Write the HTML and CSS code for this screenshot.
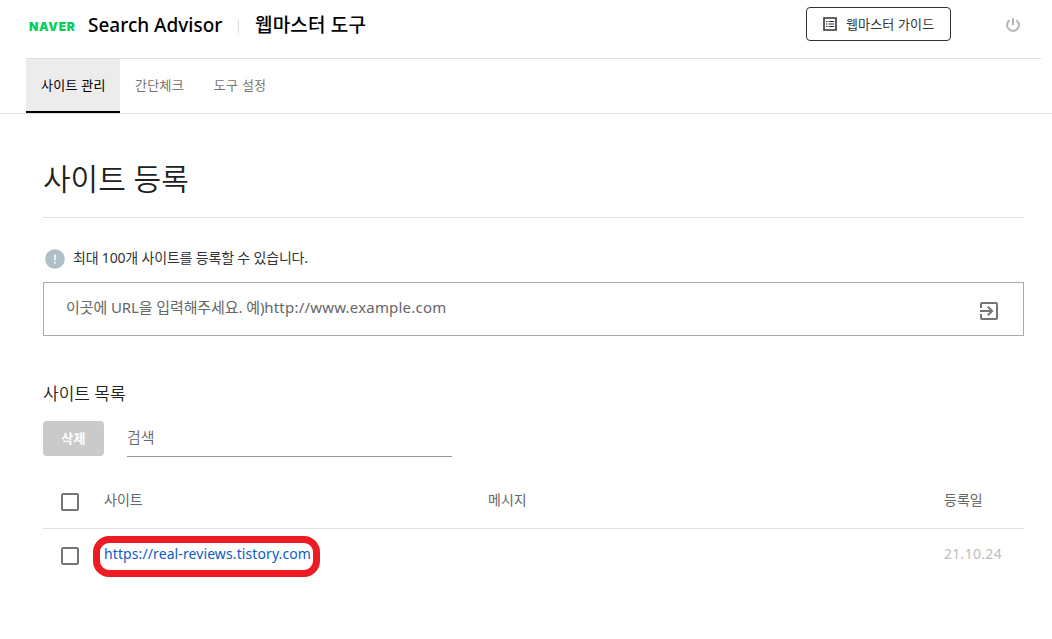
FILE: index.html
```html
<!DOCTYPE html>
<html lang="ko">
<head>
  <meta charset="UTF-8">
  <meta name="viewport" content="width=device-width, initial-scale=1.0">
  <title>웹마스터 도구</title>
  <link rel="stylesheet" href="styles.css">
</head>
<body>
  <header class="header">
    <span class="naver">NAVER</span>
    <span class="brand">Search Advisor</span>
    <span class="divider"></span>
    <span class="tool-name">웹마스터 도구</span>
    <button class="guide" type="button">
      <svg width="14" height="14" viewBox="0 0 14 14">
        <path d="M1 1h12v12H1z" fill="none" stroke="#333" stroke-width="1.6"/>
        <path d="M3 4.5h1.5M3 7h1.5M3 9.5h1.5M5.5 4.5H11M5.5 7H11M5.5 9.5H11" stroke="#333" stroke-width="1.1"/>
      </svg>
      <span class="guide-text">웹마스터 가이드</span>
    </button>
    <svg class="power" width="14" height="14" viewBox="0 0 14 14" fill="none" stroke="#b5b5b5" stroke-width="2">
      <path d="M7 .3v7M3.6 2.2a5.9 5.9 0 1 0 6.8 0"/>
    </svg>
  </header>
  <nav class="tabs">
    <a class="tab active"><span>사이트 관리</span></a>
    <a class="tab"><span>간단체크</span></a>
    <a class="tab"><span>도구 설정</span></a>
  </nav>
  <main class="content">
    <h1>사이트 등록</h1>
    <p class="notice">
      <svg width="20" height="20" viewBox="0 0 20 20">
        <circle cx="10" cy="10" r="9.8" fill="#b0bec5"/>
        <path d="M10 5.5v5.7M10 12.7v1.8" stroke="#fff" stroke-width="1.5"/>
      </svg>
      <span>최대 100개 사이트를 등록할 수 있습니다.</span>
    </p>
    <div class="url-box">
      <span class="url-hint">이곳에 URL을 입력해주세요. 예)<span class="url-example">http://www.example.com</span></span>
      <svg class="enter" width="24" height="24" viewBox="0 0 24 24" fill="#757575">
        <path d="M10.09 15.59L11.5 17l5-5-5-5-1.41 1.41L12.67 11H3v2h9.67l-2.58 2.59zM19 3H5a2 2 0 0 0-2 2v4h2V5h14v14H5v-4H3v4a2 2 0 0 0 2 2h14a2 2 0 0 0 2-2V5a2 2 0 0 0-2-2z"/>
      </svg>
    </div>
    <h2>사이트 목록</h2>
    <div class="toolbar">
      <button class="delete" type="button"><span>삭제</span></button>
      <div class="search"><span>검색</span></div>
    </div>
    <div class="row head">
      <span class="check"></span>
      <span class="cell">사이트</span>
      <span class="cell">메시지</span>
      <span class="cell">등록일</span>
    </div>
    <div class="row">
      <span class="check"></span>
      <span class="cell"><a class="site">https://real-reviews.tistory.com</a></span>
      <span class="cell"></span>
      <span class="cell date">21.10.24</span>
    </div>
  </main>
</body>
</html>
```

FILE: styles.css
```css
*, *::after {
  box-sizing: border-box;
}
body {
  min-height: 100vh;
  margin: 0;
  background-color: #fff;
  color: #212121;
  font-family: "Noto Sans", "Noto Sans CJK KR", sans-serif;
  font-size: 14px;
  line-height: 20px;
  white-space: nowrap;
}
h1, h2, p {
  margin: 0;
}
button {
  font-family: inherit;
  padding: 0;
}
svg {
  display: block;
  flex: none;
}
.header {
  display: flex;
  align-items: flex-start;
  height: 59px;
  margin: 0 11px 0 26px;
  border-bottom: 1px solid #e0e0e0;
}
.naver {
  width: 59px;
  padding: 17px 0 0 3px;
  color: #03cf5d;
  font-family: Inter, sans-serif;
  font-size: 12px;
  font-weight: 900;
  letter-spacing: 0.8px;
}
.brand {
  width: 150px;
  padding: 15px 0 0 3px;
  color: #000;
  font-size: 19px;
  font-weight: 500;
}
.divider {
  width: 1px;
  height: 13px;
  margin: 20px 16px 0 3px;
  background-color: #ddd;
}
.tool-name {
  padding-top: 15px;
  color: #000;
  font-size: 19px;
  font-weight: 500;
  letter-spacing: 0.2px;
}
.guide {
  display: flex;
  align-items: center;
  width: 145px;
  height: 34px;
  margin: 7px 55px 0 auto;
  padding-left: 16px;
  gap: 9px;
  border: 1px solid #333;
  border-radius: 4px;
  background-color: #fff;
  color: #333;
  font-size: 13px;
  letter-spacing: 0.15px;
}
.guide-text {
  padding-bottom: 2px;
}
.power {
  margin: 18px 21px 0 0;
}
.tabs {
  display: flex;
  height: 55px;
  padding-left: 26px;
  border-bottom: 1px solid #e0e0e0;
}
.tab {
  padding: 16px 15px 0;
  color: #757575;
  font-size: 13px;
  letter-spacing: 0.25px;
}
.tab.active {
  width: 94px;
  border-bottom: 2px solid #000;
  background-color: #ececec;
  color: #000;
}
.content {
  padding: 0 28px 0 43px;
}
h1 {
  height: 104px;
  padding-top: 43px;
  border-bottom: 1px solid #e0e0e0;
  font-size: 30px;
  font-weight: 350;
  line-height: 44px;
}
.notice {
  display: flex;
  align-items: center;
  height: 22px;
  margin-top: 30px;
  padding-left: 2px;
  gap: 8px;
  color: #333;
  font-size: 14px;
  letter-spacing: -0.18px;
}
.notice span {
  padding-bottom: 2px;
}
.url-box {
  display: flex;
  align-items: flex-start;
  justify-content: space-between;
  height: 54px;
  margin-top: 12px;
  padding: 14px 22px 0;
  border: 1px solid #aaa;
  color: #666;
  font-size: 15px;
  letter-spacing: -0.1px;
}
.url-example {
  letter-spacing: 0.2px;
}
.enter {
  margin-top: 2px;
}
h2 {
  margin-top: 46px;
  font-size: 17px;
  font-weight: 350;
  line-height: 24px;
}
.toolbar {
  display: flex;
  margin-top: 15px;
  gap: 23px;
}
.delete {
  width: 61px;
  height: 35px;
  padding-bottom: 2px;
  border: none;
  border-radius: 4px;
  background-color: #cacaca;
  color: #fff;
  font-size: 13px;
  font-weight: 700;
  letter-spacing: 0.3px;
}
.search {
  width: 325px;
  height: 36px;
  padding-top: 6px;
  border-bottom: 1px solid #949494;
  color: #666;
  font-size: 15px;
  font-weight: 350;
}
.row {
  display: grid;
  grid-template-columns: 43px 384px 456px 1fr;
  align-items: center;
  height: 53px;
  padding-left: 18px;
  color: #666;
}
.head {
  height: 54px;
  margin-top: 18px;
  border-bottom: 1px solid #e0e0e0;
}
.cell {
  padding-bottom: 3px;
}
.check {
  width: 18px;
  height: 18px;
  border: 2px solid #757575;
  border-radius: 2px;
}
.site {
  position: relative;
  color: #0b5cc4;
  letter-spacing: 0.1px;
}
/* red marker around the registered site */
.site::after {
  content: "";
  position: absolute;
  left: -11px;
  top: -8px;
  width: 227px;
  height: 41px;
  border: 7px solid #ed1c24;
  border-radius: 16px;
}
.date {
  color: #bdbdbd;
  letter-spacing: 0.3px;
}
```
